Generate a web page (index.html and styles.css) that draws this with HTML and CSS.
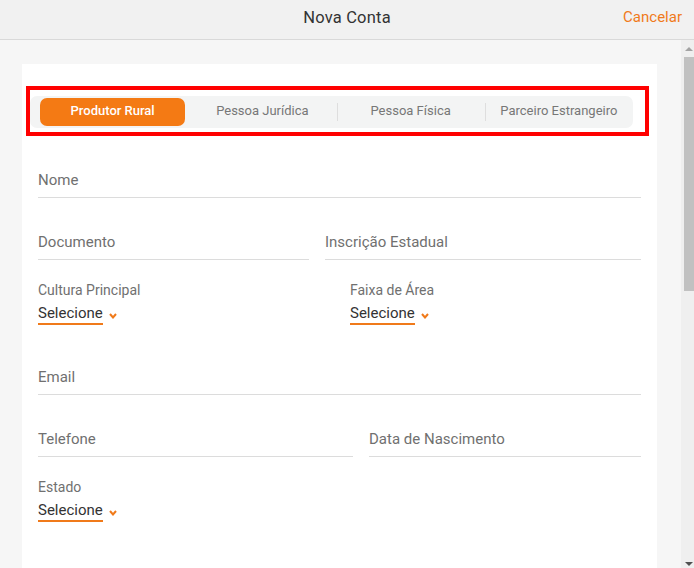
FILE: index.html
```html
<!DOCTYPE html>
<html lang="pt">
<head>
<meta charset="utf-8">
<title>Nova Conta</title>
<link rel="stylesheet" href="styles.css">
</head>
<body>
<header class="topbar">
  <div class="topbar-title">Nova Conta</div>
  <a class="topbar-cancel">Cancelar</a>
</header>
<div class="viewport">
  <main class="content">
    <section class="card">
      <div class="tabs-frame">
        <div class="tabs">
          <div class="tab active">Produtor Rural</div>
          <div class="tab">Pessoa Jurídica</div>
          <div class="tab divided">Pessoa Física</div>
          <div class="tab divided">Parceiro Estrangeiro</div>
        </div>
      </div>

      <div class="form">
        <div class="field field-first">Nome</div>

        <div class="row row-a">
          <div class="field">Documento</div>
          <div class="field">Inscrição Estadual</div>
        </div>

        <div class="row row-select">
          <div class="select">
            <div class="select-label">Cultura Principal</div>
            <div class="select-value"><span class="select-text">Selecione</span><svg class="chev" width="8" height="6" viewBox="0 0 8 6"><polyline points="1,1 4,4.5 7,1" fill="none" stroke="#f07a1a" stroke-width="2"/></svg></div>
          </div>
          <div class="select">
            <div class="select-label">Faixa de Área</div>
            <div class="select-value"><span class="select-text">Selecione</span><svg class="chev" width="8" height="6" viewBox="0 0 8 6"><polyline points="1,1 4,4.5 7,1" fill="none" stroke="#f07a1a" stroke-width="2"/></svg></div>
          </div>
        </div>

        <div class="field field-email">Email</div>

        <div class="row row-b">
          <div class="field">Telefone</div>
          <div class="field">Data de Nascimento</div>
        </div>

        <div class="row row-select row-last">
          <div class="select">
            <div class="select-label">Estado</div>
            <div class="select-value"><span class="select-text">Selecione</span><svg class="chev" width="8" height="6" viewBox="0 0 8 6"><polyline points="1,1 4,4.5 7,1" fill="none" stroke="#f07a1a" stroke-width="2"/></svg></div>
          </div>
        </div>
      </div>
    </section>
  </main>
  <div class="scrollbar">
    <div class="sb-arrow sb-up"></div>
    <div class="sb-thumb"></div>
    <div class="sb-track"></div>
    <div class="sb-arrow sb-down"></div>
  </div>
</div>
</body>
</html>
```
FILE: styles.css
```css
* { box-sizing: border-box; }
html, body { margin: 0; padding: 0; height: 100%; overflow: hidden; }
body {
  font-family: Roboto, "Noto Sans", "Liberation Sans", sans-serif;
  background: #f6f6f6;
  color: #333;
}
.topbar {
  height: 40px;
  background: #f1f1f1;
  border-bottom: 1px solid #d9d9d9;
  display: flex;
  align-items: center;
  justify-content: center;
  position: relative;
}
.topbar-title {
  font-size: 16.5px;
  letter-spacing: 0.2px;
  color: #333;
  margin-left: 0;
  padding-bottom: 4px;
}
.topbar-cancel {
  position: absolute;
  right: 12px;
  top: 0;
  line-height: 34px;
  font-size: 15px;
  color: #f07a1a;
}
.viewport {
  display: flex;
  height: calc(100% - 40px);
}
.content {
  flex: 1;
  padding: 24px 24px 0 22px;
  overflow: hidden;
}
.card {
  background: #fff;
  padding: 26px 16px 60px 16px;
  min-height: 600px;
}
.tabs-frame {
  margin: 0 -4px 0 -8px;
  padding: 6px 12px 4px 0;
  outline: 4px solid #ff0000;
}
.tabs {
  background: #f3f4f4;
  border-radius: 7px;
  padding: 2px 0 2px 10px;
  display: grid;
  grid-template-columns: repeat(4, 1fr);
  height: 32px;
}
.tab {
  font-size: 13px;
  color: #777;
  display: flex;
  align-items: center;
  justify-content: center;
  position: relative;
  padding-bottom: 3px;
}
.tab.divided::before {
  content: "";
  position: absolute;
  left: 0;
  top: 5px;
  bottom: 5px;
  width: 1px;
  background: #dedede;
}
.tab.active {
  background: #f47a14;
  color: #fff;
  font-weight: 500;
  border-radius: 7px;
  margin-right: 3px;
}
.form { padding-top: 38px; }
.field {
  font-size: 15px;
  line-height: 20px;
  color: #707070;
  padding-bottom: 7px;
  border-bottom: 1px solid #dcdcdc;
}
.row { display: grid; column-gap: 16px; }
.row-a { grid-template-columns: 271px 1fr; margin-top: 34px; }
.row-b { grid-template-columns: 1fr 272px; margin-top: 34px; }
.row-select { grid-template-columns: 312px 1fr; column-gap: 0; margin-top: 21px; }
.field-email { margin-top: 42px; }
.select-label {
  font-size: 14px;
  line-height: 18px;
  color: #707070;
}
.select-value {
  margin-top: 4px;
  display: flex;
  align-items: center;
}
.select-text {
  font-size: 15px;
  line-height: 20px;
  color: #333;
  border-bottom: 2px solid #f07a1a;
  padding-bottom: 0;
}
.chev { margin-left: 6px; margin-top: 3px; }
.scrollbar {
  width: 13px;
  background: #efefef;
  display: flex;
  flex-direction: column;
  align-items: center;
  padding-left: 2px;
}
.sb-arrow {
  width: 0; height: 0;
  border-left: 4px solid transparent;
  border-right: 4px solid transparent;
}
.sb-up { border-bottom: 4px solid #a3a3a3; margin: 7px 0 6px; }
.sb-thumb { width: 10px; height: 234px; background: #c1c1c1; }
.sb-track { flex: 1; }
.sb-down { border-top: 4px solid #505050; margin: 0 0 2px; }
```
